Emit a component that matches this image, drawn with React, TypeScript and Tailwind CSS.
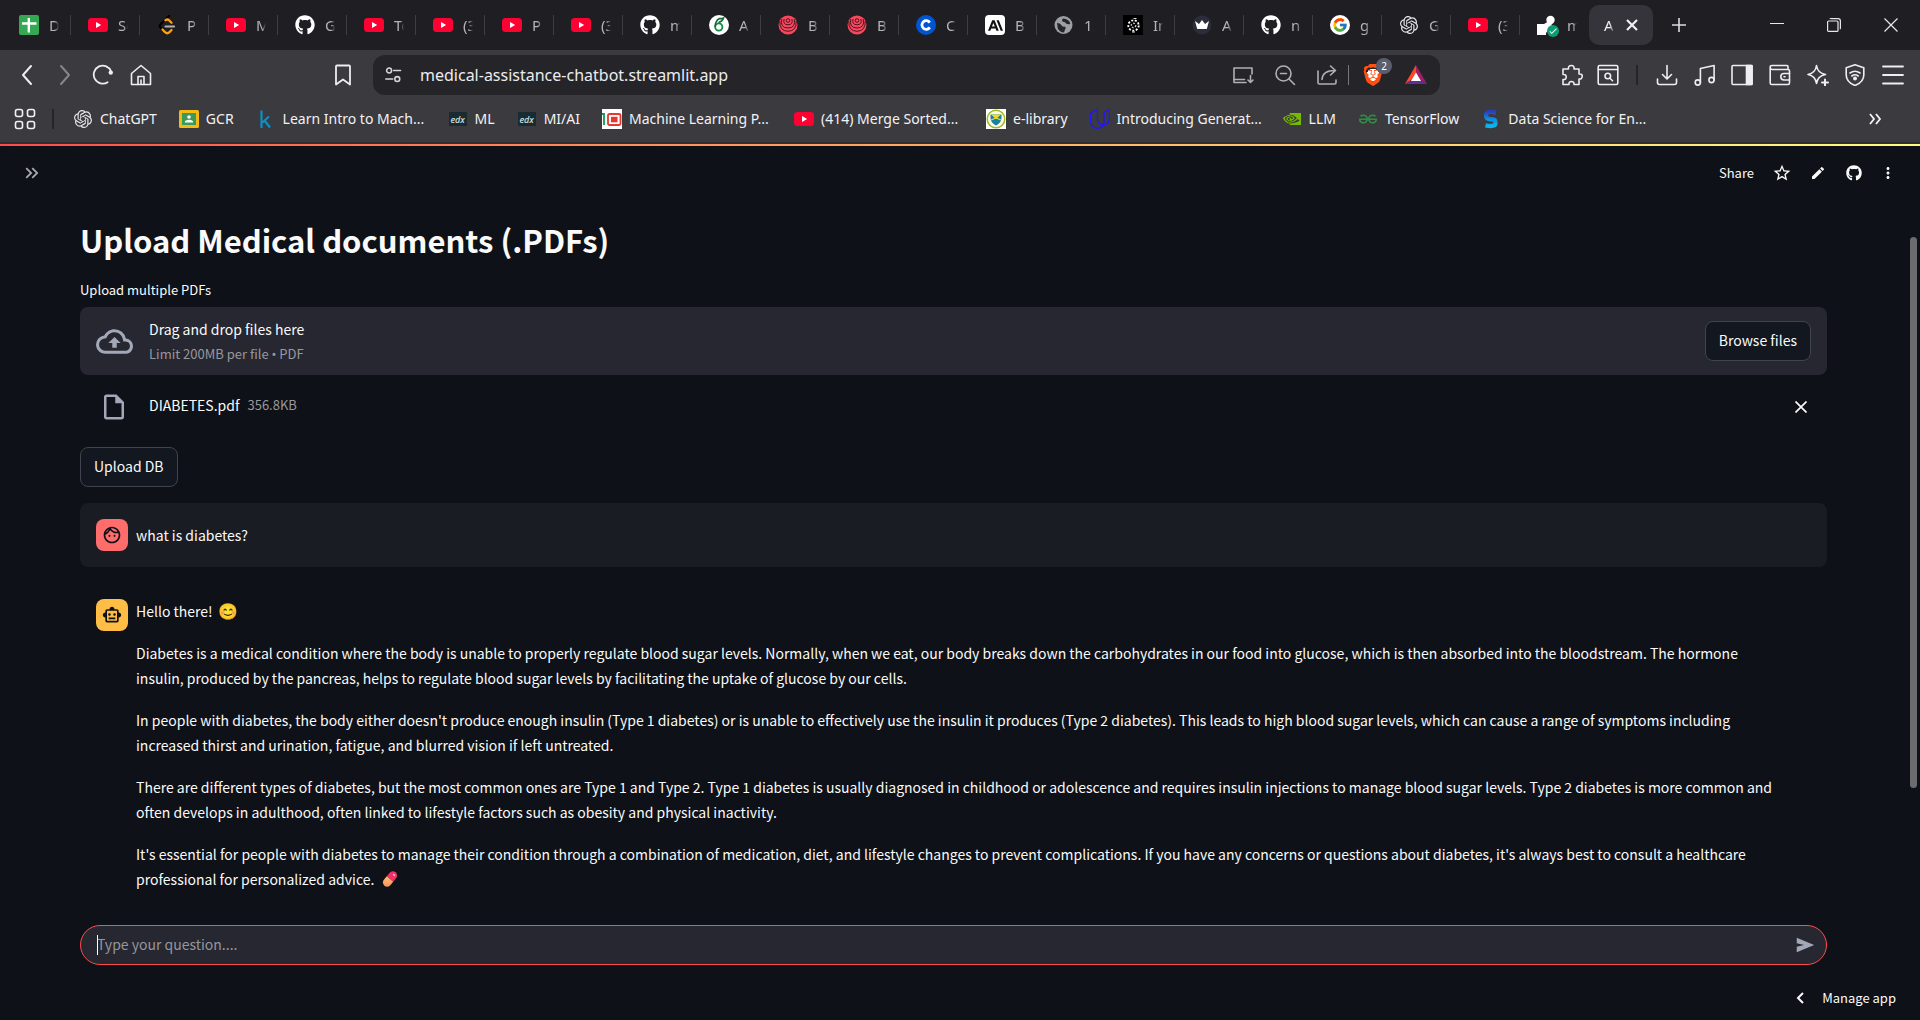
import type { ReactNode } from "react";
import {
  MdCheck,
  MdEdit,
  MdKeyboardDoubleArrowRight,
  MdMoreVert,
  MdOutlineCloudUpload,
  MdOutlineFace,
  MdOutlineInsertDriveFile,
  MdOutlineSmartToy,
  MdStarBorder,
} from "react-icons/md";
import { FcGoogle } from "react-icons/fc";
import { FaGithub } from "react-icons/fa";
import {
  SiAnthropic,
  SiBrave,
  SiGeeksforgeeks,
  SiNvidia,
  SiOpenai,
  SiUdacity,
} from "react-icons/si";

/* ---------- line icons used by the browser toolbar ---------- */

function Line({ children, size = 22, width = 1.6 }: { children: ReactNode; size?: number; width?: number }) {
  return (
    <svg
      width={size}
      height={size}
      viewBox="0 0 22 22"
      fill="none"
      stroke="currentColor"
      strokeWidth={width}
      strokeLinecap="round"
      strokeLinejoin="round"
      aria-hidden="true"
    >
      {children}
    </svg>
  );
}

const Back = () => <Line width={2}><path d="M15 2 7 11l8 9" /></Line>;
const Forward = () => <Line width={2}><path d="m7 2 8 9-8 9" /></Line>;
const Reload = () => (
  <Line width={1.8}>
    <path d="M15.6 18.2A9 9 0 1 1 19.2 7.500" />
    <circle cx="18.800" cy="8.600" r="2.200" fill="currentColor" stroke="none" />
  </Line>
);
const Home = () => (
  <Line>
    <path d="M1.500 9.500 11 1.500l9.500 8V20.500h-19z" />
    <path d="M8 20.500v-8h6v8" />
    <path d="M11 16v4" />
  </Line>
);
const Bookmark = () => <Line width={1.8}><path d="M4 2.500Q4 1.500 5 1.500h12q1 0 1 1v18l-7-5-7 5z" /></Line>;
const Tune = () => (
  <Line size={18} width={1.9}>
    <circle cx="5" cy="5.500" r="3" />
    <path d="M10.500 5.500H19M1 16h8.500" />
    <circle cx="15" cy="16" r="3" />
  </Line>
);
const Install = () => (
  <Line>
    <path d="M12.500 15.500H2V4h18v6" />
    <path d="M2 15.500v3h12M18.500 11.500v7M16 16l2.500 2.500L21 16" />
  </Line>
);
const ZoomOut = () => (
  <Line>
    <circle cx="9.500" cy="9.500" r="7.500" />
    <path d="m15 15 5.500 5.500M6.500 9.500h6" />
  </Line>
);
const ShareOut = () => (
  <Line>
    <path d="M2 7v11.500Q2 20 3.500 20h15q1.500 0 1.500-1.500V16" />
    <path d="M6 15.500Q6.500 6.500 19 6.500M14.500 2l5 4.500-5 4.500" />
  </Line>
);
const Puzzle = () => (
  <Line>
    <path d="M2 5h5.500q-.500-3.500 2.800-3.500T13 5h5v5q3.500-.4 3.200 2.500T18 15v5.500h-5q.3-3-2.500-3T8 20.500H2v-5q3.200.3 3.200-2.500T2 10.500z" />
  </Line>
);
const SearchTabs = () => (
  <Line>
    <rect x="1.200" y="1.500" width="19.600" height="19" rx="1.500" />
    <path d="M1.500 5.500h19" />
    <circle cx="10.800" cy="12" r="2.800" />
    <path d="m13 14.200 2.500 2.500" />
  </Line>
);
const Download = () => (
  <Line>
    <path d="M11 1.500v13M6.500 10.500l4.500 4.500 4.500-4.500M1.500 15v3.500q0 2 2 2h15q2 0 2-2V15" />
  </Line>
);
const Music = () => (
  <Line>
    <circle cx="3.800" cy="18.500" r="2.600" />
    <circle cx="17.500" cy="16" r="2.600" />
    <path d="M6.400 18.500V4.500L20.100 1.500V16" />
  </Line>
);
const SidePanel = () => (
  <Line>
    <rect x="1" y="1.500" width="20" height="19" rx="1" />
    <rect x="15.500" y="1.500" width="5.500" height="19" fill="currentColor" />
  </Line>
);
const Wallet = () => (
  <Line>
    <path d="M19 5.500v-3q0-1-1-1H3q-1.800 0-1.800 1.500V19q0 1.500 1.500 1.500H19q1.500 0 1.500-1.500V7q0-1.500-1.500-1.500H3q-1.500 0-1.800-1.800" />
    <path d="M20.500 9.500H15q-3.200 0-3.200 3.200T15 16h5.500M15 12.800h1" />
  </Line>
);
const Sparkle = () => (
  <Line>
    <path d="M9.500 1.500q1 7.500 9 9-8 1.500-9 9-1-7.500-8.500-9 7.500-1.500 8.500-9z" />
    <path d="M18 15.500v6M15 18.500h6" strokeWidth="2" />
  </Line>
);
const ShieldWifi = () => (
  <Line>
    <path d="m11 .8 8.800 3v7.200q0 7-8.800 10.500Q2.200 18 2.200 11V3.800z" />
    <path d="M6 9q5-3.600 10 0M7.800 12q3.200-2.400 6.400 0" />
    <circle cx="11" cy="14.500" r="1.200" fill="currentColor" />
  </Line>
);
const Menu = () => <Line width={1.8}><path d="M1 2.500h20M1 11h20M1 19.500h20" /></Line>;

/* ---------- site icons ---------- */

const YouTube = () => (
  <svg width="20" height="20" viewBox="0 0 20 20" aria-hidden="true">
    <rect y="3" width="20" height="14" rx="3.500" fill="#ff0033" />
    <path d="m8 7 5.200 3L8 13z" fill="#fff" />
  </svg>
);
const Sheets = () => (
  <svg width="20" height="20" viewBox="0 0 20 20" aria-hidden="true">
    <rect width="20" height="20" rx="2" fill="#34a853" />
    <path d="M9.800 3v14.500M3 8.500h14.500" stroke="#fff" strokeWidth="2.400" />
  </svg>
);
const LeetCode = () => (
  <svg width="20" height="20" viewBox="0 0 20 20" fill="none" strokeLinecap="round" aria-hidden="true">
    <path d="m12 1-8.500 8.500q-1.500 1.500 0 3l2.500 2.500" stroke="#000" strokeWidth="2.300" />
    <path d="M8.500 5.200q2-1.500 3.500 0l2.500 2.500M5.500 14.500l2.500 2.700q2.200 2 4.500 0l2-2.200" stroke="#ffa116" strokeWidth="2.300" />
    <path d="M8.500 11.500H17" stroke="#b3b3b3" strokeWidth="2.200" />
  </svg>
);
const GitHub = () => <FaGithub size={20} color="#fff" />;
const OpenAI = () => <SiOpenai size={18} color="#e6e6e8" />;
const Leaf = () => (
  <svg width="20" height="20" viewBox="0 0 20 20" aria-hidden="true">
    <circle cx="10" cy="10" r="10" fill="#fff" />
    <circle cx="9.800" cy="12" r="3.600" fill="none" stroke="#138a43" strokeWidth="1.800" />
    <path d="M6.200 12Q6 6 10.500 3.500q2 .5 4-.5-1 3.500-5 4.500" fill="none" stroke="#0f6b35" strokeWidth="1.600" />
  </svg>
);
const RedSwirl = () => (
  <svg width="20" height="20" viewBox="0 0 20 20" fill="none" stroke="#4a1622" strokeWidth="1" aria-hidden="true">
    <circle cx="10" cy="10" r="9.500" fill="#f9475c" stroke="none" />
    <circle cx="10" cy="5.500" r="1.800" />
    <path d="M6.200 4q-1.800 5.500 3.800 5.800 5.600-.3 3.800-5.800M3.800 4q-2 8.800 6.200 9 8.200-.2 6.200-9M1.800 6q-.5 10 8.200 10.300 8.700-.3 8.200-10.300" />
  </svg>
);
const Coursera = () => (
  <svg width="20" height="20" viewBox="0 0 20 20" fill="none" aria-hidden="true">
    <circle cx="10" cy="10" r="10" fill="#0056d2" />
    <path d="M13.800 7.600a4.300 4.300 0 1 0 0 4.800" stroke="#fff" strokeWidth="2.800" />
  </svg>
);
const Anthropic = () => (
  <span className="flex size-5 items-center justify-center rounded-sm bg-white">
    <SiAnthropic size={15} color="#111" />
  </span>
);
const Globe = () => (
  <svg width="20" height="20" viewBox="0 0 20 20" aria-hidden="true">
    <circle cx="9.500" cy="10" r="9" fill="#9aa0a6" />
    <path
      d="M3 8q3 0 4.500 2.200T11 11.500q1.500 1.500 0 3l-1 3q-4 0-6.200-4zM9 3.500q-2 2 0 3.200 2.500.2 3 1.800 1.800 1 4.300.5-.8-5-7.300-5.500z"
      fill="#26252a"
    />
  </svg>
);
const Dots = () => (
  <svg width="20" height="20" viewBox="0 0 20 20" aria-hidden="true">
    <rect width="20" height="20" fill="#000" />
    <circle cx="10.500" cy="10.500" r="5.200" fill="none" stroke="#fff" strokeWidth="1.800" strokeDasharray="2 1.600" />
    <circle cx="10.500" cy="10.500" r="2.200" fill="none" stroke="#ccc" strokeWidth="1.400" strokeDasharray="1.600 1.400" />
    <path d="M10.500 3.500h3M9 17h3" stroke="#ddd" strokeWidth="1.200" />
  </svg>
);
const Crown = () => (
  <svg width="20" height="20" viewBox="0 0 20 20" aria-hidden="true">
    <circle cx="10" cy="10" r="9.500" fill="#2b2d3a" />
    <path d="m3 6 4 3 3-4 3 4 4-3-2.200 8H5.200z" fill="#fff" />
  </svg>
);
const Verified = () => (
  <span className="relative flex size-5">
    <svg width="20" height="20" viewBox="0 0 20 20" aria-hidden="true">
      <circle cx="13.500" cy="5" r="4.200" fill="#fff" />
      <path d="M0 9h7l5-3 3 4-6 8v2H0z" fill="#fff" />
    </svg>
    <span className="absolute -right-0.5 -bottom-0.5 flex size-3 items-center justify-center rounded-full bg-[#0b9e74]">
      <MdCheck size={10} color="#fff" />
    </span>
  </span>
);
const Classroom = () => (
  <svg width="20" height="20" viewBox="0 0 20 20" aria-hidden="true">
    <rect y="1" width="20" height="18" rx="1.500" fill="#f5ba14" />
    <rect x="3" y="4" width="14" height="12" fill="#3c9a57" />
    <circle cx="10" cy="8" r="1.800" fill="#fff" />
    <path d="M5.800 13.500q0-2.800 4.200-2.800t4.200 2.800z" fill="#fff" />
  </svg>
);
const Kaggle = () => (
  <svg width="20" height="20" viewBox="0 0 20 20" fill="none" stroke="#0e8fc4" strokeWidth="2.200" aria-hidden="true">
    <path d="M5.500 1.500V19M13 7.500 6.500 13.500M8.500 11.500l5.500 7" />
  </svg>
);
const Edx = () => (
  <span className="flex h-3.5 w-[18px] items-center justify-center bg-[#172b30] font-['Noto_Sans'] text-[9px] leading-none font-medium text-[#d8e4e4] italic">
    edx
  </span>
);
const RedSquare = () => (
  <svg width="20" height="20" viewBox="0 0 20 20" aria-hidden="true">
    <rect width="20" height="20" fill="#fff" />
    <path d="M0 5h2v11" fill="none" stroke="#159a4a" strokeWidth="1.800" />
    <rect x="6" y="5" width="12.500" height="11" rx="1.500" fill="none" stroke="#e8372f" strokeWidth="1.800" />
    <rect x="9" y="7.800" width="6.500" height="5.500" fill="#e8372f" />
  </svg>
);
const Crest = () => (
  <svg width="20" height="20" viewBox="0 0 20 20" aria-hidden="true">
    <rect width="20" height="20" fill="#fff" />
    <circle cx="10" cy="10" r="8.800" fill="#fbfbe6" stroke="#a3b81c" strokeWidth="1.500" />
    <path d="M4.500 5.500h11V9q0 5-5.500 7.500Q4.500 14 4.500 9z" fill="#1c7fa6" />
    <path d="M5 5.500h10L10 10z" fill="#e9dc2f" />
    <path d="m5 11 5-2 5 2" fill="none" stroke="#e9dc2f" strokeWidth="1.200" />
  </svg>
);
const Geeks = () => <SiGeeksforgeeks size={18} color="#2f8d46" />;
const SLogo = () => (
  <svg width="20" height="20" viewBox="0 0 20 20" fill="none" aria-hidden="true">
    <defs>
      <linearGradient id="s-logo" x1="0" y1="0" x2="0" y2="1">
        <stop offset="0" stopColor="#2a3fb8" />
        <stop offset=".5" stopColor="#0a8ee0" />
        <stop offset="1" stopColor="#0bb4f2" />
      </linearGradient>
    </defs>
    <path d="M15 3.500Q5 1.500 5 6t5 4.200T14.500 14q0 4.300-10 2.300" stroke="url(#s-logo)" strokeWidth="4.400" />
  </svg>
);
const Bat = () => (
  <svg width="22" height="20" viewBox="0 0 22 20" aria-hidden="true">
    <path d="M11 0 0 19l11-7z" fill="#ff4724" />
    <path d="m11 0 11 19-11-7z" fill="#9e1f63" />
    <path d="M0 19h22l-11-7z" fill="#662d91" />
    <path d="m11 7.500 5 8.500H6z" fill="#fff" />
  </svg>
);
const Pill = () => (
  <svg className="ml-1 inline-block align-[-3px]" width="18" height="18" viewBox="0 0 18 18" role="img" aria-label="💊">
    <defs>
      <linearGradient id="pill-low" x1="0" y1="0" x2="1" y2="1">
        <stop offset="0" stopColor="#ffc06a" />
        <stop offset="1" stopColor="#f98a62" />
      </linearGradient>
    </defs>
    <g transform="rotate(40 9 9)">
      <path d="M4.800 9V4.500a4.200 4.200 0 0 1 8.400 0V9z" fill="#ee3266" />
      <path d="M4.800 9v4.500a4.200 4.200 0 0 0 8.400 0V9z" fill="url(#pill-low)" />
      <ellipse cx="9.500" cy="3.200" rx="1.500" ry=".9" fill="#ffb3cf" />
    </g>
  </svg>
);

/* ---------- data ---------- */

const tabs: { icon: ReactNode; title: string }[] = [
  { icon: <Sheets />, title: "D" },
  { icon: <YouTube />, title: "Se" },
  { icon: <LeetCode />, title: "Pr" },
  { icon: <YouTube />, title: "M" },
  { icon: <GitHub />, title: "G" },
  { icon: <YouTube />, title: "To" },
  { icon: <YouTube />, title: "(3" },
  { icon: <YouTube />, title: "P" },
  { icon: <YouTube />, title: "(3" },
  { icon: <GitHub />, title: "m" },
  { icon: <Leaf />, title: "A" },
  { icon: <RedSwirl />, title: "B" },
  { icon: <RedSwirl />, title: "B" },
  { icon: <Coursera />, title: "C" },
  { icon: <Anthropic />, title: "B" },
  { icon: <Globe />, title: "1." },
  { icon: <Dots />, title: "In" },
  { icon: <Crown />, title: "A" },
  { icon: <GitHub />, title: "n" },
  { icon: <FcGoogle size={20} className="rounded-full bg-white p-0.5" />, title: "g" },
  { icon: <OpenAI />, title: "G" },
  { icon: <YouTube />, title: "(3" },
  { icon: <Verified />, title: "m" },
];

const bookmarks: { icon: ReactNode; title: string; long?: boolean }[] = [
  { icon: <OpenAI />, title: "ChatGPT" },
  { icon: <Classroom />, title: "GCR" },
  { icon: <Kaggle />, title: "Learn Intro to Mach...", long: true },
  { icon: <Edx />, title: "ML" },
  { icon: <Edx />, title: "MI/AI" },
  { icon: <RedSquare />, title: "Machine Learning P...", long: true },
  { icon: <YouTube />, title: "(414) Merge Sorted...", long: true },
  { icon: <Crest />, title: "e-library" },
  { icon: <SiUdacity size={20} color="#2015ff" />, title: "Introducing Generat...", long: true },
  { icon: <SiNvidia size={18} color="#76b900" />, title: "LLM" },
  { icon: <Geeks />, title: "TensorFlow" },
  { icon: <SLogo />, title: "Data Science for En...", long: true },
];

const answer = [
  "Diabetes is a medical condition where the body is unable to properly regulate blood sugar levels. Normally, when we eat, our body breaks down the carbohydrates in our food into glucose, which is then absorbed into the bloodstream. The hormone insulin, produced by the pancreas, helps to regulate blood sugar levels by facilitating the uptake of glucose by our cells.",
  "In people with diabetes, the body either doesn't produce enough insulin (Type 1 diabetes) or is unable to effectively use the insulin it produces (Type 2 diabetes). This leads to high blood sugar levels, which can cause a range of symptoms including increased thirst and urination, fatigue, and blurred vision if left untreated.",
  "There are different types of diabetes, but the most common ones are Type 1 and Type 2. Type 1 diabetes is usually diagnosed in childhood or adolescence and requires insulin injections to manage blood sugar levels. Type 2 diabetes is more common and often develops in adulthood, often linked to lifestyle factors such as obesity and physical inactivity.",
];

/* ---------- browser frame ---------- */

function IconButton({ label, children, className = "" }: { label: string; children: ReactNode; className?: string }) {
  return (
    <button type="button" aria-label={label} className={"flex shrink-0 items-center justify-center " + className}>
      {children}
    </button>
  );
}

function TabStrip() {
  return (
    <div className="flex h-[50px] items-center bg-[#1f1e23] pl-0.5">
      {tabs.map((t, i) => (
        <button
          key={i}
          type="button"
          className={
            "flex h-5 w-[69px] shrink-0 items-center gap-2.5 pl-[17px] " +
            (i < tabs.length - 1 ? "border-r border-[#3f3e44]" : "")
          }
        >
          <span className="flex w-5 shrink-0 justify-center">{t.icon}</span>
          <span className="w-2.5 overflow-hidden text-left text-[15px] leading-5 whitespace-nowrap text-[#b4b3b8] [mask-image:linear-gradient(90deg,#000_60%,transparent)]">
            {t.title}
          </span>
        </button>
      ))}
      <div className="flex h-10 w-16 shrink-0 items-center gap-3 rounded-[10px] bg-[#35343a] pl-[15px] text-[#f0f0f2]">
        <span className="w-2.5 overflow-hidden text-[15px] leading-5 [mask-image:linear-gradient(90deg,#000_60%,transparent)]">A</span>
        <IconButton label="Close tab">
          <svg width="12" height="12" viewBox="0 0 12 12" stroke="currentColor" strokeWidth="2.200" aria-hidden="true">
            <path d="m1 1 10 10M11 1 1 11" />
          </svg>
        </IconButton>
      </div>
      <IconButton label="New tab" className="ml-[19px] text-[#dcdce0]">
        <svg width="14" height="14" viewBox="0 0 14 14" stroke="currentColor" strokeWidth="1.600" aria-hidden="true">
          <path d="M7 0v14M0 7h14" />
        </svg>
      </IconButton>
      <div className="ml-auto flex items-center gap-[43px] pr-[22px] text-[#e8e8ea]">
        <IconButton label="Minimize">
          <svg width="14" height="14" viewBox="0 0 14 14" stroke="currentColor" aria-hidden="true">
            <path d="M0 5.500h14" />
          </svg>
        </IconButton>
        <IconButton label="Restore">
          <svg width="14" height="14" viewBox="0 0 14 14" fill="none" stroke="currentColor" strokeWidth="1.200" aria-hidden="true">
            <rect x=".6" y="3" width="10.400" height="10.400" rx="1" />
            <path d="M3 1q0-.4 1-.4h7q2.400 0 2.400 2.400v7q0 1-.6 1" />
          </svg>
        </IconButton>
        <IconButton label="Close window">
          <svg width="14" height="14" viewBox="0 0 14 14" stroke="currentColor" strokeWidth="1.200" aria-hidden="true">
            <path d="m.5.5 13 13M13.500.5l-13 13" />
          </svg>
        </IconButton>
      </div>
    </div>
  );
}

function Toolbar() {
  return (
    <div className="flex h-[50px] items-center text-[#eeeef0]">
      <div className="flex w-[373px] shrink-0 items-center gap-4 pr-[19px] pl-4">
        <IconButton label="Back"><Back /></IconButton>
        <IconButton label="Forward" className="text-[#87868b]"><Forward /></IconButton>
        <IconButton label="Reload"><Reload /></IconButton>
        <IconButton label="Home"><Home /></IconButton>
        <IconButton label="Bookmark this tab" className="ml-auto"><Bookmark /></IconButton>
      </div>
      <div className="flex h-10 min-w-0 flex-1 items-center rounded-xl bg-[#252429] pr-[13px] pl-3 text-[#b0b0b4]">
        <IconButton label="Site information" className="text-[#d5d5d8]"><Tune /></IconButton>
        <input
          aria-label="Address"
          defaultValue="medical-assistance-chatbot.streamlit.app"
          className="ml-[17px] min-w-0 flex-1 bg-transparent text-[16px] leading-6 text-[#ececee] outline-none"
        />
        <IconButton label="Install app" className="mr-5"><Install /></IconButton>
        <IconButton label="Zoom" className="mr-5"><ZoomOut /></IconButton>
        <IconButton label="Share page"><ShareOut /></IconButton>
        <span className="mr-[9px] ml-2.5 h-5 w-px bg-[#77767b]" />
        <IconButton label="Brave Shields" className="relative mx-1">
          <SiBrave size={22} color="#ff4f12" className="rounded-md [background:radial-gradient(#fff_40%,transparent_42%)]" />
          <span className="absolute -top-1.5 left-3.5 flex size-4 items-center justify-center rounded-full bg-[#5b5e6c] text-[10px] leading-none text-white">
            2
          </span>
        </IconButton>
        <IconButton label="Brave Rewards" className="ml-[17px]"><Bat /></IconButton>
      </div>
      <div className="flex w-[480px] shrink-0 items-center justify-end pr-4">
        <IconButton label="Extensions" className="mr-3.5"><Puzzle /></IconButton>
        <IconButton label="Search tabs" className="mr-[17px]"><SearchTabs /></IconButton>
        <span className="mr-[18px] h-5 w-0.5 bg-[#252429]" />
        <div className="flex w-[248px] items-center justify-between">
          <IconButton label="Downloads"><Download /></IconButton>
          <IconButton label="Media"><Music /></IconButton>
          <IconButton label="Side panel"><SidePanel /></IconButton>
          <IconButton label="Wallet"><Wallet /></IconButton>
          <IconButton label="Leo"><Sparkle /></IconButton>
          <IconButton label="VPN"><ShieldWifi /></IconButton>
          <IconButton label="Menu"><Menu /></IconButton>
        </div>
      </div>
    </div>
  );
}

function BookmarkBar() {
  return (
    <div className="flex h-[42px] items-center pb-1 pl-3.5 text-[#f2f2f4]">
      <IconButton label="All bookmarks">
        <Line>
          <rect x="1.500" y="1.500" width="7" height="7" rx="2" />
          <rect x="13.500" y="1.500" width="7" height="7" rx="2" />
          <rect x="1.500" y="13.500" width="7" height="7" rx="2" />
          <rect x="13.500" y="13.500" width="7" height="7" rx="2" />
        </Line>
      </IconButton>
      <span className="mr-[19px] ml-4 h-5 w-0.5 bg-[#252429]" />
      <nav aria-label="Bookmarks" className="flex items-center gap-[22px]">
        {bookmarks.map((b, i) => (
          <a
            key={i}
            href="#"
            className={
              "flex items-center gap-[7px] text-[14px] leading-5 whitespace-nowrap " + (b.long ? "w-[170px]" : "")
            }
          >
            <span className="flex w-5 shrink-0 justify-center">{b.icon}</span>
            {b.title}
          </a>
        ))}
      </nav>
      <IconButton label="More bookmarks" className="mr-[38px] ml-auto">
        <svg width="14" height="12" viewBox="0 0 14 12" fill="none" stroke="currentColor" strokeWidth="1.800" aria-hidden="true">
          <path d="m2 1 4 5-4 5M8 1l4 5-4 5" />
        </svg>
      </IconButton>
    </div>
  );
}

/* ---------- chat page ---------- */

function Header() {
  return (
    <header className="flex h-[54px] items-center justify-between pr-[23px] pl-[21px] text-[#fafafa]">
      <IconButton label="Open sidebar" className="text-[#a9a9ac]"><MdKeyboardDoubleArrowRight size={22} /></IconButton>
      <div className="flex items-center">
        <button type="button" className="mr-[18px] text-[13px] leading-5">Share</button>
        <IconButton label="Favorite" className="mr-[18px]"><MdStarBorder size={20} /></IconButton>
        <IconButton label="Edit" className="mr-5"><MdEdit size={16} /></IconButton>
        <IconButton label="View source" className="mr-[17px]"><FaGithub size={16} /></IconButton>
        <IconButton label="More options"><MdMoreVert size={18} /></IconButton>
      </div>
    </header>
  );
}

function Uploader() {
  return (
    <section className="flex flex-col">
      <label htmlFor="pdfs" className="mb-[7px] self-start text-[13px] leading-5">Upload multiple PDFs</label>
      <div className="flex h-[68px] items-center rounded-lg bg-[#262730] px-4">
        <MdOutlineCloudUpload size={37} color="#a3a8b8" />
        <div className="ml-4 flex flex-1 flex-col gap-0.5">
          <span className="text-[14px] leading-6">Drag and drop files here</span>
          <span className="text-[13px] leading-[22px] text-[#97989e]">
            Limit 200MB per file <span className="font-['Noto_Sans']">•</span> PDF
          </span>
        </div>
        <button
          id="pdfs"
          type="button"
          className="h-10 rounded-lg border border-[#41444c] bg-[#131720] px-[13px] pb-0.5 text-[14px] leading-6"
        >
          Browse files
        </button>
      </div>
      <div className="mt-4 flex h-8 items-center pr-5 pl-[19px]">
        <MdOutlineInsertDriveFile size={30} color="#a3a8b8" />
        <span className="ml-5 pb-1 text-[14px] leading-6">DIABETES.pdf</span>
        <span className="ml-2 flex-1 pb-1 text-[13px] leading-6 text-[#97989e]">356.8KB</span>
        <IconButton label="Remove DIABETES.pdf">
          <svg width="12" height="12" viewBox="0 0 12 12" stroke="currentColor" strokeWidth="1.700" aria-hidden="true">
            <path d="m.5.5 11 11M11.500.5l-11 11" />
          </svg>
        </IconButton>
      </div>
      <button
        type="button"
        className="mt-6 h-10 self-start rounded-lg border border-[#41444c] bg-[#131720] px-[13px] pb-0.5 text-[14px] leading-6"
      >
        Upload DB
      </button>
    </section>
  );
}

function Messages() {
  return (
    <section className="mt-4 flex flex-col gap-4 text-[14px] leading-[25px]">
      <div className="flex items-center gap-2 rounded-lg bg-[#1a1c24] p-4">
        <span className="flex size-8 shrink-0 items-center justify-center rounded-lg bg-[#ff6c6c] text-[#0e1117]">
          <MdOutlineFace size={20} />
        </span>
        <p>what is diabetes?</p>
      </div>
      <div className="flex items-start gap-2 py-4 pr-[50px] pl-4">
        <span className="flex size-8 shrink-0 items-center justify-center rounded-lg bg-[#ffbd45] text-[#0e1117]">
          <MdOutlineSmartToy size={20} />
        </span>
        <div className="flex flex-col gap-[17px]">
          <p>
            Hello there! <span className="ml-0.5 text-[16px] leading-none">😊</span>
          </p>
          {answer.map((p) => (
            <p key={p.slice(0, 12)}>{p}</p>
          ))}
          <p>
            It's essential for people with diabetes to manage their condition through a combination of medication, diet, and
            lifestyle changes to prevent complications. If you have any concerns or questions about diabetes, it's always best
            to consult a healthcare professional for personalized advice. <Pill />
          </p>
        </div>
      </div>
    </section>
  );
}

function ChatInput() {
  return (
    <form className="relative flex h-10 items-center rounded-full border border-[#ff4b4b] bg-[#262730] pr-2.5 pl-4">
      <span className="absolute left-4 h-5 w-px bg-white" />
      <input
        type="text"
        aria-label="Type your question"
        placeholder="Type your question...."
        className="min-w-0 flex-1 bg-transparent pb-0.5 text-[14px] leading-6 outline-none placeholder:text-[#95969c]"
      />
      <IconButton label="Send" className="text-[#a3a8b8]">
        <svg width="22" height="22" viewBox="0 0 24 24" fill="currentColor" aria-hidden="true">
          <path d="M3 20v-6l8-2-8-2V4l19 8z" />
        </svg>
      </IconButton>
    </form>
  );
}

export default function App() {
  return (
    <div className="flex min-h-screen flex-col bg-[#0e1117] font-['Noto_Sans',sans-serif]">
      <div className="border-b-2 border-[#2f2e33] bg-[#3b3a3f]">
        <TabStrip />
        <Toolbar />
        <BookmarkBar />
      </div>
      <div className="relative flex flex-1 flex-col font-['Noto_Sans_CJK_SC',sans-serif] text-[#fafafa]">
        <div className="h-0.5 bg-gradient-to-r from-[#ff4b4b] to-[#fffd80]" />
        <Header />
        <main className="flex flex-1 flex-col pr-[93px] pl-20">
          <h1 className="mt-[18px] mb-[18px] text-[31px] leading-[44px] font-bold">Upload Medical documents (.PDFs)</h1>
          <Uploader />
          <Messages />
          <div className="mt-auto pt-2">
            <ChatInput />
          </div>
        </main>
        <footer className="flex h-[55px] items-end justify-end pr-6 pb-3">
          <button type="button" className="flex items-center gap-[18px] text-[13px] leading-5">
            <svg width="8" height="12" viewBox="0 0 8 12" fill="none" stroke="currentColor" strokeWidth="2" aria-hidden="true">
              <path d="M7 1 2 6l5 5" />
            </svg>
            Manage app
          </button>
        </footer>
        <div className="absolute top-[93px] right-[3px] h-[551px] w-[7px] rounded-full bg-[#6b6c70]" />
      </div>
    </div>
  );
}
